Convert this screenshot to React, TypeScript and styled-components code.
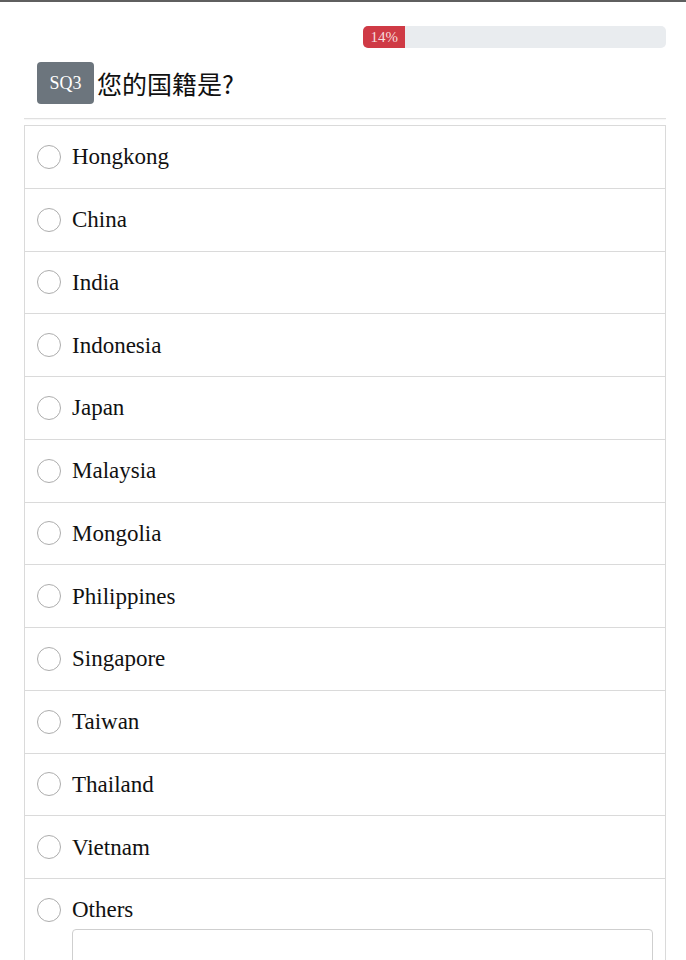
import styled, { createGlobalStyle } from "styled-components";

const GlobalStyle = createGlobalStyle`
  html, body {
    margin: 0;
    padding: 0;
    background: #ffffff;
  }
  body {
    border-top: 2px solid #5f5f5f;
    font-family: "Liberation Serif", "Times New Roman", serif;
    color: #212529;
  }
`;

const options = [
  "Hongkong",
  "China",
  "India",
  "Indonesia",
  "Japan",
  "Malaysia",
  "Mongolia",
  "Philippines",
  "Singapore",
  "Taiwan",
  "Thailand",
  "Vietnam"
];

const App = () => {
  return (
    <>
      <GlobalStyle />
      <Page>
        <ProgressTrack>
          <ProgressFill style={{ width: "14%" }}>14%</ProgressFill>
        </ProgressTrack>
        <QuestionHeader>
          <Badge>SQ3</Badge>
          <Title>您的国籍是?</Title>
        </QuestionHeader>
        <Divider />
        <OptionList>
          {options.map((label) => (
            <OptionItem key={label}>
              <OptionLine>
                <Radio />
                <Label>{label}</Label>
              </OptionLine>
            </OptionItem>
          ))}
          <OptionItem>
            <OptionLine>
              <Radio />
              <Label>Others</Label>
            </OptionLine>
            <OtherInput type="text" />
          </OptionItem>
        </OptionList>
      </Page>
    </>
  );
};

const Page = styled.div`
  display: flex;
  flex-direction: column;
  padding: 24px 20px 0 24px;
`;

const ProgressTrack = styled.div`
  align-self: flex-end;
  width: 303px;
  height: 22px;
  background: #e9ecef;
  border-radius: 5px;
  overflow: hidden;
  display: flex;
`;

const ProgressFill = styled.div`
  background: #cf3a45;
  color: #f6dcdc;
  font-size: 15px;
  line-height: 22px;
  text-align: center;
`;

const QuestionHeader = styled.div`
  display: flex;
  align-items: center;
  gap: 3px;
  margin-top: 14px;
  padding-left: 13px;
`;

const Badge = styled.span`
  display: inline-flex;
  align-items: center;
  justify-content: center;
  width: 57px;
  height: 42px;
  background: #6c757d;
  color: #ffffff;
  font-size: 18px;
  border-radius: 4px;
`;

const Title = styled.h2`
  margin: 0;
  font-family: "Noto Sans CJK SC", "Noto Sans", sans-serif;
  font-weight: 400;
  font-size: 25px;
  color: #111111;
  line-height: 1;
`;

const Divider = styled.div`
  height: 1px;
  margin-top: 14px;
  background: #e0e0e0;
  box-shadow: 0 1px 1px rgba(0, 0, 0, 0.04);
`;

const OptionList = styled.ul`
  list-style: none;
  margin: 6px 0 0 0;
  padding: 0;
  display: flex;
  flex-direction: column;
`;

const OptionItem = styled.li`
  border: 1px solid #dadada;
  margin-bottom: -1px;
  padding: 14px 12px;
  display: flex;
  flex-direction: column;
`;

const OptionLine = styled.div`
  display: flex;
  align-items: center;
  gap: 11px;
  height: 33.75px;
`;

const Radio = styled.span`
  width: 24px;
  height: 24px;
  box-sizing: border-box;
  border: 1px solid #adadad;
  border-radius: 50%;
  background: #ffffff;
  flex-shrink: 0;
`;

const Label = styled.span`
  font-size: 23px;
  color: #111111;
  line-height: 1;
`;

const OtherInput = styled.input`
  margin: 2px 0 0 35px;
  height: 40px;
  border: 1px solid #cfcfcf;
  border-radius: 4px;
  box-sizing: border-box;
`;

export default App;
